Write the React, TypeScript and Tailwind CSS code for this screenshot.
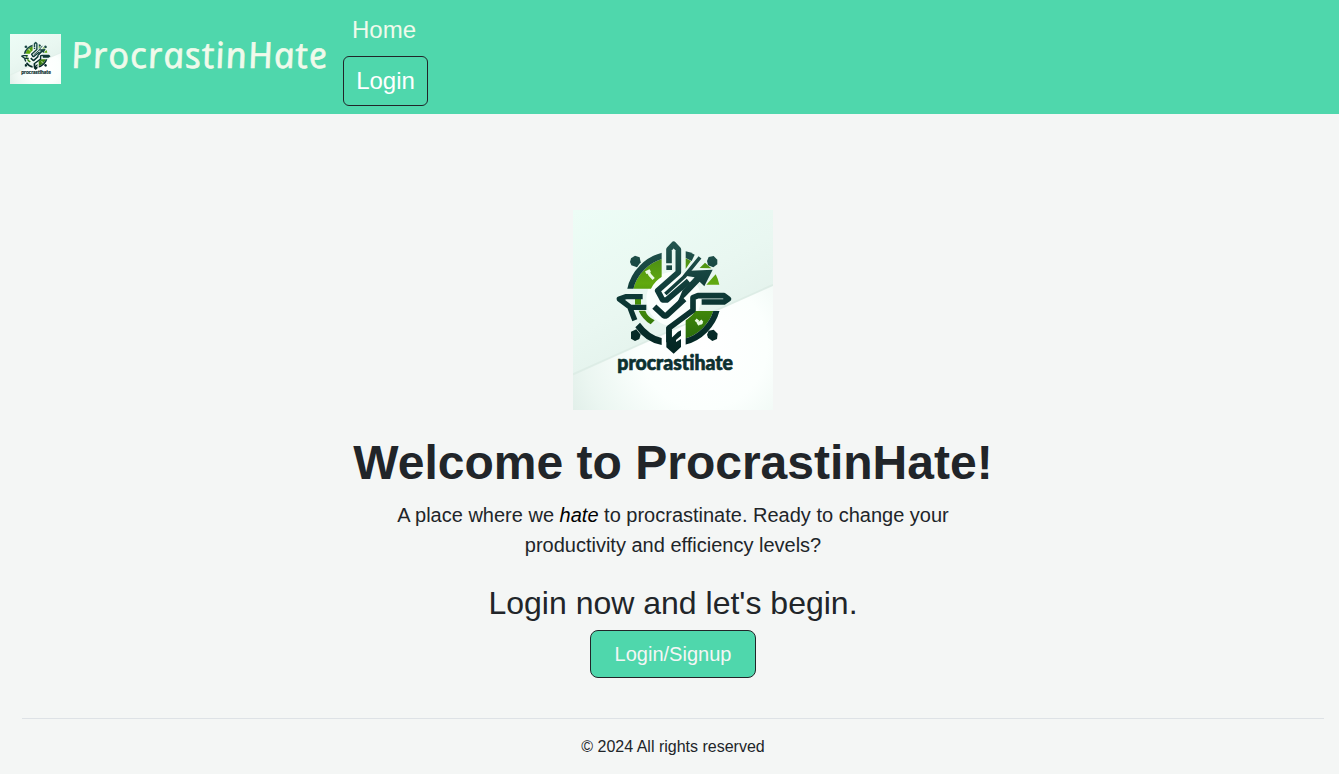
import React from "react";

function Logo({ className, id }: { className: string; id: string }) {
  const url = (name: string) => `url(#${id}-${name})`;
  return (
    <svg viewBox="9 15 600 600" preserveAspectRatio="none" className={className} role="img" aria-label="procrastihate">
      <defs>
        <linearGradient id={`${id}-bg`} x1="0" y1="0" x2="0.5" y2="1">
          <stop offset="0" stopColor="#edfdf6" />
          <stop offset="0.5" stopColor="#e9f7f1" />
          <stop offset="1" stopColor="#dfeee8" />
        </linearGradient>
        <radialGradient id={`${id}-fold`} gradientUnits="userSpaceOnUse" cx="400" cy="420" r="480">
          <stop offset="0" stopColor="#ffffff" />
          <stop offset="0.4" stopColor="#fbfffd" />
          <stop offset="0.75" stopColor="#ebf6f1" />
          <stop offset="1" stopColor="#dcebe5" />
        </radialGradient>
        <linearGradient id={`${id}-dark`} gradientUnits="userSpaceOnUse" x1="0" y1="105" x2="0" y2="440">
          <stop offset="0" stopColor="#24564f" />
          <stop offset="0.5" stopColor="#0d3936" />
          <stop offset="1" stopColor="#032522" />
        </linearGradient>
        <linearGradient id={`${id}-lime`} gradientUnits="userSpaceOnUse" x1="0" y1="140" x2="0" y2="410">
          <stop offset="0" stopColor="#468716" />
          <stop offset="0.35" stopColor="#61a90f" />
          <stop offset="0.6" stopColor="#438b09" />
          <stop offset="1" stopColor="#286b0c" />
        </linearGradient>
        <clipPath id={`${id}-tl`}><path d="M100 100H275V251H100Z" /></clipPath>
        <clipPath id={`${id}-br`}><path d="M347 318H500V500H347Z" /></clipPath>
      </defs>
      <path fill={url("bg")} d="M9 15H609V615H9Z" />
      <path fill={url("fold")} d="M9 510L609 242V615H9Z" />
      <path d="M9 508L609 240" stroke="#cbded5" strokeWidth="6" opacity=".3" />
      <circle cx="311" cy="282" r="82" fill="#fafffc" />

      <g clipPath={url("tl")}>
        <circle cx="311" cy="281" r="99" fill="none" stroke={url("lime")} strokeWidth="50" />
        <circle cx="311" cy="281" r="133" fill="none" stroke={url("dark")} strokeWidth="18" />
      </g>
      <g clipPath={url("br")}>
        <circle cx="311" cy="281" r="99" fill="none" stroke={url("lime")} strokeWidth="50" />
        <circle cx="311" cy="281" r="133" fill="none" stroke={url("dark")} strokeWidth="18" />
      </g>
      <path d="M232 196L240 210L251 222M227 203L241 197M377 344L385 351M383 359L397 347M391 351L396 357" stroke="#eafae3" strokeWidth="9" fill="none" />
      <g fill={url("dark")}>
        <path d="M347 139Q363 141 374 149L365 168L347 159Z" />
        <path d="M183 160L195 152L209 157L212 172L201 187L184 181L180 171Z" />
        <path d="M416 156L431 153L442 164L442 178L430 187L414 181L411 168Z" />
        <path d="M183 380L199 373L212 389L208 402L195 408L183 401Z" />
        <path d="M416 377L431 374L443 386L441 402L427 408L414 398L411 389Z" />
        <path d="M173 312L189 310L202 343L187 349Z" />
        <path d="M196 367L210 353Q237 390 275 399V420Q226 412 196 367Z" />
      </g>
      <g fill={url("lime")}>
        <path d="M347 160L363 168L347 192Z" />
        <path d="M389 189L405 173L424 190Z" />
        <path d="M409 239L437 208Q444 221 448 239Z" />
        <path d="M195 280H213V299H195Z" />
        <path d="M206 317H226Q232 335 254 346L242 358Q217 342 206 317Z" />
      </g>

      <g fill="none" stroke={url("dark")} strokeLinejoin="round">
        <path strokeWidth="17" d="M297 175V133L311 118L325 133V202L263 257L278 285H290L356 228" />
        <path strokeWidth="14" d="M289 188H306" />
        <path strokeWidth="16" d="M218 275H167L148 282L181 307H229" />
        <path strokeWidth="18" d="M253 305L282 332H289L343 282" />
        <path strokeWidth="17" d="M297 412V369L369 316V278L384 272H462L475 282L462 291H395" />
        <path strokeWidth="11" d="M390 157L342 216L286 267" />
      </g>
      <path fill={url("dark")} d="M358 197L428 194L403 244L389 230L345 276L322 293L338 255L374 217L350 213Z" />
      <path fill={url("dark")} d="M289 366L305 374V398L324 380L333 376V392L318 405V411L333 402V426L311 446L289 427Z" />

      <text x="142" y="494" textLength="347" lengthAdjust="spacingAndGlyphs" fill="#0c302f" stroke="#0c302f" strokeWidth="2" className="font-['Lato',sans-serif] text-[60px] font-black">procrastihate</text>
    </svg>
  );
}

export default function App() {
  return (
    <div className="flex h-[774px] w-full flex-col overflow-hidden bg-[#f4f6f5] font-['Liberation_Sans',Arial,sans-serif] text-[#212529]">
      <header className="flex h-[114px] shrink-0 items-center bg-[#4fd7ac] pl-2.5">
        <Logo id="nav" className="mt-1 h-[50px] w-[51px] shrink-0" />
        <a href="#" className="ml-[11px] w-[271px] shrink-0 text-[#f0faeb]">
          <svg viewBox="0 0 271 54" className="block h-[54px] w-[271px] overflow-visible">
            <text
              x="-6"
              y="38"
              textLength="257"
              lengthAdjust="spacingAndGlyphs"
              transform="skewX(10)"
              strokeWidth="0.7"
              className="fill-[#f0faeb] stroke-[#f0faeb] font-['Comic_Sans_MS','Open_Sans',sans-serif] text-[36px] font-medium italic tracking-[1px]"
            >
              ProcrastinHate
            </text>
          </svg>
        </a>
        <nav className="flex h-full flex-col items-start text-2xl leading-9">
          <a href="#" className="ml-[9px] mt-3 h-9 text-[#f0faeb]">Home</a>
          <button className="mt-2 h-[50px] w-[85px] rounded-md border border-[#212529] text-white">Login</button>
        </nav>
      </header>
      <main className="ml-[7px] flex flex-1 flex-col items-center pt-24 text-center">
        <Logo id="hero" className="size-[200px] shrink-0" />
        <h1 className="mt-6 text-5xl font-bold leading-[58px]">Welcome to ProcrastinHate!</h1>
        <p className="mt-2 w-[600px] text-xl leading-[30px]">
          A place where we <em className="text-black">hate</em> to procrastinate. Ready to change your productivity and efficiency levels?
        </p>
        <h2 className="mt-6 text-[32px] leading-[38px]">Login now and let's begin.</h2>
        <button className="mt-2 h-12 w-[166px] shrink-0 rounded-lg border border-[#212529] bg-[#4fd7ac] text-xl text-[#f4f6f5]">Login/Signup</button>
      </main>
      <footer className="ml-[22px] mr-[15px] h-14 shrink-0 border-t border-[#dee2e6] pt-4 text-center text-base leading-6">© 2024 All rights reserved</footer>
    </div>
  );
}
